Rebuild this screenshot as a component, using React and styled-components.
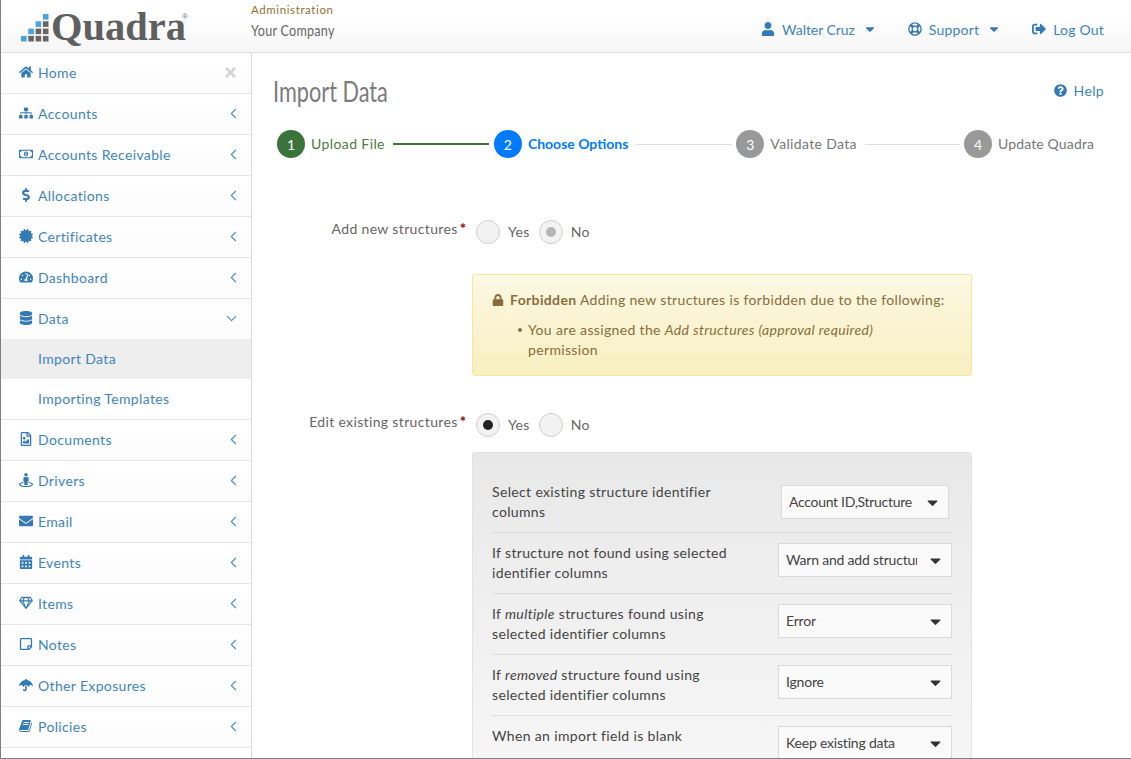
import React from "react";
import styled, { createGlobalStyle } from "styled-components";
import {
    FaHome, FaSitemap, FaRegMoneyBillAlt, FaDollarSign, FaCertificate, FaTachometerAlt, FaDatabase,
    FaRegFileImage, FaStreetView, FaEnvelope, FaCalendarAlt, FaRegGem, FaRegStickyNote, FaUmbrella,
    FaTimes, FaUser, FaRegLifeRing, FaSignOutAlt, FaQuestionCircle, FaLock, FaCaretDown,
} from "react-icons/fa";
import { ChevronLeft, ChevronDown } from "lucide-react";

const GlobalStyle = createGlobalStyle`
    html, body {
        margin: 0;
        padding: 0;
        background: #fff;
    }
    body {
        font-family: "Lato", "Noto Sans", sans-serif;
        font-size: 14px;
        letter-spacing: 0.35px;
    }
    * {
        box-sizing: border-box;
    }
`;

const Frame = styled.div`
    height: 759px;
    overflow: hidden;
    border-left: 1px solid #808080;
    border-bottom: 1px solid #808080;
    display: flex;
    flex-direction: column;
`;

const Header = styled.header`
    height: 53px;
    flex: none;
    display: flex;
    align-items: stretch;
    background: linear-gradient(#ffffff 30%, #f5f5f5);
    border-bottom: 1px solid #dedede;
`;

const LogoArea = styled.div`
    width: 250px;
    display: flex;
    align-items: center;
    padding: 0 0 0 20px;
`;

const LogoText = styled.span`
    font-family: "Liberation Serif", serif;
    font-weight: 700;
    font-size: 40.5px;
    letter-spacing: 0;
    color: #5f5f5f;
    line-height: 1;
    margin-top: 2px;
`;

const LogoMark = styled.sup`
    font-family: "Liberation Sans", sans-serif;
    font-size: 8px;
    letter-spacing: 0;
    color: #777;
    align-self: flex-start;
    margin: 12px 0 0 -4px;
`;

const CompanyBlock = styled.div`
    display: flex;
    flex-direction: column;
    padding-top: 2px;
`;

const CompanyRole = styled.span`
    font-size: 11.5px;
    line-height: 15px;
    letter-spacing: 0.6px;
    color: #94702f;
`;

const CompanyName = styled.span`
    font-size: 16px;
    line-height: 26px;
    color: #666;
    transform: scaleX(0.785);
    transform-origin: left center;
`;

const TopNav = styled.nav`
    margin-left: auto;
    display: flex;
    align-items: center;
    padding: 6px 27px 0 0;
    gap: 31px;
`;

const TopLink = styled.a`
    display: flex;
    align-items: center;
    gap: 7px;
    letter-spacing: ${(p) => (p.$tight ? "-0.05px" : "0.2px")};
    color: #3f85bd;
    svg {
        color: #337ab7;
        font-size: 14px;
    }
`;

const Caret = styled(FaCaretDown)`
    margin-left: 1px;
`;

const Body = styled.div`
    flex: 1;
    display: flex;
    min-height: 0;
`;

const Sidebar = styled.aside`
    width: 251px;
    flex: none;
    border-right: 1px solid #dcdcdc;
    background: #fff;
    display: flex;
    flex-direction: column;
`;

const NavRow = styled.a`
    height: ${(p) => (p.$open ? "40px" : "41px")};
    flex: none;
    display: flex;
    align-items: center;
    padding: 0 9px 2px 15px;
    color: #3f85bd;
    background: linear-gradient(#ffffff, #fcfcfc);
    border-bottom: ${(p) => (p.$open ? "none" : "1px solid #e5e5e5")};
`;

const NavIcon = styled.span`
    width: 21px;
    padding-right: 2px;
    display: flex;
    justify-content: center;
    font-size: 14px;
    color: #337ab7;
`;

const NavLabel = styled.span`
    padding-left: 1px;
    flex: 1;
`;

const NavArrow = styled.span`
    display: flex;
    margin-right: ${(p) => (p.$open ? "2px" : "0")};
    color: #4a8fc4;
`;

const CloseIcon = styled.span`
    display: flex;
    font-size: 15px;
    color: #d4d4d4;
    margin-right: 4px;
`;

const SubRow = styled.a`
    height: ${(p) => (p.$last ? "41px" : "40px")};
    flex: none;
    display: flex;
    align-items: center;
    padding: 0 0 2px 37px;
    color: #3f85bd;
    background: ${(p) => (p.$active ? "#eeeeee" : "#fff")};
    border-bottom: ${(p) => (p.$last ? "1px solid #e5e5e5" : "none")};
`;

const Main = styled.main`
    flex: 1;
    min-width: 0;
    padding: 0 27px 0 21px;
    overflow: hidden;
`;

const TitleRow = styled.div`
    display: flex;
    align-items: center;
    justify-content: space-between;
    height: 76px;
`;

const PageTitle = styled.h1`
    margin: 0;
    font-weight: 400;
    font-size: 28px;
    letter-spacing: 0;
    color: #7b7b7b;
    transform: scaleX(0.775);
    transform-origin: left center;
`;

const HelpLink = styled.a`
    display: flex;
    align-items: center;
    gap: 7px;
    margin-top: -1px;
    color: #3f85bd;
    svg {
        color: #337ab7;
        font-size: 13px;
    }
`;

const Stepper = styled.div`
    display: flex;
    align-items: center;
    height: 30px;
    padding-left: 4px;
`;

const StepCircle = styled.span`
    width: 28px;
    height: 28px;
    flex: none;
    border-radius: 50%;
    display: flex;
    align-items: center;
    justify-content: center;
    letter-spacing: 0;
    color: #fff;
    background: ${(p) => p.$color};
`;

const StepLabel = styled.span`
    margin: 0 8px 0 6px;
    padding-bottom: 2px;
    white-space: nowrap;
    letter-spacing: ${(p) => p.$spacing}px;
    color: ${(p) => p.$color};
    font-weight: ${(p) => (p.$bold ? 700 : 400)};
`;

const StepLine = styled.span`
    width: ${(p) => p.$width}px;
    height: ${(p) => (p.$done ? "2px" : "1px")};
    flex: none;
    margin-right: ${(p) => (p.$done ? "5px" : "4px")};
    background: ${(p) => (p.$done ? "#3a743a" : "#dddddd")};
`;

const FormRow = styled.div`
    display: grid;
    grid-template-columns: 199px 500px;
    margin-top: ${(p) => p.$top}px;
`;

const FieldLabel = styled.label`
    text-align: right;
    padding-right: 6px;
    color: #666;
    line-height: 20px;
    white-space: nowrap;
`;

const Required = styled.span`
    color: #8b0000;
    font-weight: 700;
    font-size: 15px;
    line-height: 0;
    margin-left: 2px;
    letter-spacing: 0;
`;

const RadioGroup = styled.div`
    display: flex;
    align-items: center;
    height: 24px;
    margin-top: 1px;
    padding-left: 4px;
`;

const RadioCircle = styled.span`
    width: 24px;
    height: 24px;
    border-radius: 50%;
    border: 1px solid #cfcfcf;
    background: #f2f2f2;
    display: flex;
    align-items: center;
    justify-content: center;
    margin-right: 8px;
    &::after {
        content: "";
        display: ${(p) => (p.$dot ? "block" : "none")};
        width: 10px;
        height: 10px;
        border-radius: 50%;
        background: ${(p) => p.$dot};
    }
`;

const RadioText = styled.span`
    color: #666;
    margin-right: 9px;
    padding-bottom: 2px;
`;

const Alert = styled.div`
    grid-column: 2;
    height: 102px;
    margin-top: 30px;
    padding: 15px 10px 15px 19px;
    border: 1px solid #f5e79e;
    border-radius: 3px;
    background: linear-gradient(#fcf8e3, #f8efc0);
    color: #8a6d3b;
    line-height: 20px;
    svg {
        font-size: 12px;
        margin-right: 6px;
        vertical-align: -1px;
    }
`;

const AlertList = styled.ul`
    margin: 10px 0 0;
    padding: 0 60px 0 36px;
    list-style: none;
    li {
        position: relative;
    }
    li::before {
        content: "";
        position: absolute;
        left: -10px;
        top: 8px;
        width: 4px;
        height: 4px;
        border-radius: 50%;
        background: #8a6d3b;
    }
`;

const Panel = styled.div`
    grid-column: 2;
    margin-top: 15px;
    padding: 19px 19px 0;
    border: 1px solid #e3e3e3;
    border-bottom: none;
    border-radius: 4px 4px 0 0;
    background: linear-gradient(#e8e8e8, #f5f5f5 280px);
`;

const OptionRow = styled.div`
    display: grid;
    grid-template-columns: 1fr 174px;
    height: 61px;
    padding-top: 10px;
    border-bottom: ${(p) => (p.$last ? "none" : "1px solid #dcdcdc")};
`;

const OptionLabel = styled.div`
    width: 262px;
    line-height: 20px;
    color: #444;
`;

const SelectBox = styled.div`
    height: 34px;
    margin: ${(p) => (p.$inset ? "3px" : "0")};
    padding: 0 7px;
    display: flex;
    align-items: center;
    border: 1px solid #dadada;
    background: #fafafa;
    color: #444;
    letter-spacing: ${(p) => (p.$inset ? "-0.3px" : "-0.2px")};
    svg {
        flex: none;
        font-size: 17px;
        color: #333;
    }
`;

const SelectValue = styled.span`
    flex: 1;
    min-width: 0;
    overflow: hidden;
    white-space: nowrap;
    margin-right: 10px;
    padding-bottom: 2px;
`;

// the reference uses the slanted book glyph, which the icon packages no longer ship
function BookIcon() {
    return (
        <svg width="13" height="14" viewBox="0 0 1664 1792" fill="currentColor">
            <path d="M1639 478q40 57 18 129l-275 906q-19 64-76.5 107.5t-122.5 43.5h-923q-77 0-148.5-53.5t-99.5-131.5q-24-67-2-127 0-4 3-27t4-37q1-8-3-21.5t-3-19.5q2-11 8-21t16.5-23.5 16.5-23.5q23-38 45-91.5t30-91.5q3-10 .5-30t-.5-28q3-11 17-28t17-23q21-36 42-92t25-90q1-9-2.5-32t.5-28q4-13 22-30.5t22-22.5q19-26 42.5-84.5t27.5-96.5q1-8-3-25.5t-2-26.5q2-8 9-18t18-23 17-21q8-12 16.5-30.5t15-35 16-36 19.5-32 26.5-23.5 36-11.5 47.5 5.5l-1 3q38-9 51-9h761q74 0 114 56t18 130l-274 906q-36 119-71.5 153.5t-128.5 34.5h-869q-27 0-38 15-11 16-1 43 24 70 144 70h923q29 0 56-15.5t35-41.5l300-987q7-22 5-57 38 15 59 43zm-1064 2q-4 13 2 22.5t20 9.5h608q13 0 25.5-9.5t16.5-22.5l21-64q4-13-2-22.5t-20-9.5h-608q-13 0-25.5 9.5t-16.5 22.5zm-83 256q-4 13 2 22.5t20 9.5h608q13 0 25.5-9.5t16.5-22.5l21-64q4-13-2-22.5t-20-9.5h-608q-13 0-25.5 9.5t-16.5 22.5z" />
        </svg>
    );
}

const menu = [
    { label: "Home", icon: FaHome, close: true },
    { label: "Accounts", icon: FaSitemap },
    { label: "Accounts Receivable", icon: FaRegMoneyBillAlt },
    { label: "Allocations", icon: FaDollarSign },
    { label: "Certificates", icon: FaCertificate },
    { label: "Dashboard", icon: FaTachometerAlt },
    { label: "Data", icon: FaDatabase, open: true },
    { label: "Documents", icon: FaRegFileImage },
    { label: "Drivers", icon: FaStreetView },
    { label: "Email", icon: FaEnvelope },
    { label: "Events", icon: FaCalendarAlt },
    { label: "Items", icon: FaRegGem },
    { label: "Notes", icon: FaRegStickyNote },
    { label: "Other Exposures", icon: FaUmbrella },
    { label: "Policies", icon: BookIcon },
];

const steps = [
    { n: 1, label: "Upload File", circle: "#3a743a", text: "#4d7a3c", spacing: 0.4, line: 96, done: true },
    { n: 2, label: "Choose Options", circle: "#007bff", text: "#007bff", spacing: 0, bold: true, line: 96 },
    { n: 3, label: "Validate Data", circle: "#999999", text: "#777777", spacing: 0.35, line: 95 },
    { n: 4, label: "Update Quadra", circle: "#999999", text: "#777777", spacing: 0.15 },
];

const options = [
    { label: <>Select existing structure identifier columns</>, value: "Account ID,Structure", inset: true },
    { label: <>If structure not found using selected identifier columns</>, value: "Warn and add structure" },
    { label: <>If <em>multiple</em> structures found using selected identifier columns</>, value: "Error" },
    { label: <>If <em>removed</em> structure found using selected identifier columns</>, value: "Ignore" },
    { label: <>When an import field is blank</>, value: "Keep existing data", last: true },
];

function Logo() {
    const cells = [
        [3, 0, 1], [2, 1, 1], [3, 1, 0], [1, 2, 1], [2, 2, 0], [3, 2, 0],
        [0, 3, 1], [1, 3, 0], [2, 3, 0], [3, 3, 0],
    ];
    return (
        <svg width="30" height="28" viewBox="0 0 30 28" style={{ flex: "none", marginTop: 3 }}>
            {cells.map(([x, y, blue]) => (
                <rect key={`${x}-${y}`} x={x * 7.3} y={y * 7.3} width="5.6" height="5.6" fill={blue ? "#4aa3e0" : "#666666"} />
            ))}
        </svg>
    );
}

function App() {
    return (
        <Frame>
            <GlobalStyle />
            <Header>
                <LogoArea>
                    <Logo />
                    <LogoText>Quadra</LogoText>
                    <LogoMark>®</LogoMark>
                </LogoArea>
                <CompanyBlock>
                    <CompanyRole>Administration</CompanyRole>
                    <CompanyName>Your Company</CompanyName>
                </CompanyBlock>
                <TopNav>
                    <TopLink $tight><FaUser />Walter Cruz <Caret /></TopLink>
                    <TopLink><FaRegLifeRing />Support <Caret /></TopLink>
                    <TopLink><FaSignOutAlt />Log Out</TopLink>
                </TopNav>
            </Header>
            <Body>
                <Sidebar>
                    {menu.map((item) => (
                        <React.Fragment key={item.label}>
                            <NavRow $open={item.open}>
                                <NavIcon><item.icon /></NavIcon>
                                <NavLabel>{item.label}</NavLabel>
                                {item.close ? (
                                    <CloseIcon><FaTimes /></CloseIcon>
                                ) : (
                                    <NavArrow $open={item.open}>
                                        {item.open ? <ChevronDown size={17} strokeWidth={1.6} /> : <ChevronLeft size={17} strokeWidth={1.6} />}
                                    </NavArrow>
                                )}
                            </NavRow>
                            {item.open && (
                                <>
                                    <SubRow $active>Import Data</SubRow>
                                    <SubRow $last>Importing Templates</SubRow>
                                </>
                            )}
                        </React.Fragment>
                    ))}
                </Sidebar>
                <Main>
                    <TitleRow>
                        <PageTitle>Import Data</PageTitle>
                        <HelpLink><FaQuestionCircle />Help</HelpLink>
                    </TitleRow>
                    <Stepper>
                        {steps.map((step) => (
                            <React.Fragment key={step.n}>
                                <StepCircle $color={step.circle}>{step.n}</StepCircle>
                                <StepLabel $color={step.text} $bold={step.bold} $spacing={step.spacing}>{step.label}</StepLabel>
                                {step.line && <StepLine $width={step.line} $done={step.done} />}
                            </React.Fragment>
                        ))}
                    </Stepper>
                    <FormRow $top={60}>
                        <FieldLabel>Add new structures<Required>*</Required></FieldLabel>
                        <RadioGroup>
                            <RadioCircle />
                            <RadioText>Yes</RadioText>
                            <RadioCircle $dot="#b5b5b5" />
                            <RadioText>No</RadioText>
                        </RadioGroup>
                        <Alert>
                            <FaLock /><strong>Forbidden</strong> Adding new structures is forbidden due to the following:
                            <AlertList>
                                <li>You are assigned the <em>Add structures (approval required)</em> permission</li>
                            </AlertList>
                        </Alert>
                    </FormRow>
                    <FormRow $top={36}>
                        <FieldLabel>Edit existing structures<Required>*</Required></FieldLabel>
                        <RadioGroup>
                            <RadioCircle $dot="#222222" />
                            <RadioText>Yes</RadioText>
                            <RadioCircle />
                            <RadioText>No</RadioText>
                        </RadioGroup>
                        <Panel>
                            {options.map((option) => (
                                <OptionRow key={option.value} $last={option.last}>
                                    <OptionLabel>{option.label}</OptionLabel>
                                    <SelectBox $inset={option.inset}>
                                        <SelectValue>{option.value}</SelectValue>
                                        <FaCaretDown />
                                    </SelectBox>
                                </OptionRow>
                            ))}
                        </Panel>
                    </FormRow>
                </Main>
            </Body>
        </Frame>
    );
}

export default App;
